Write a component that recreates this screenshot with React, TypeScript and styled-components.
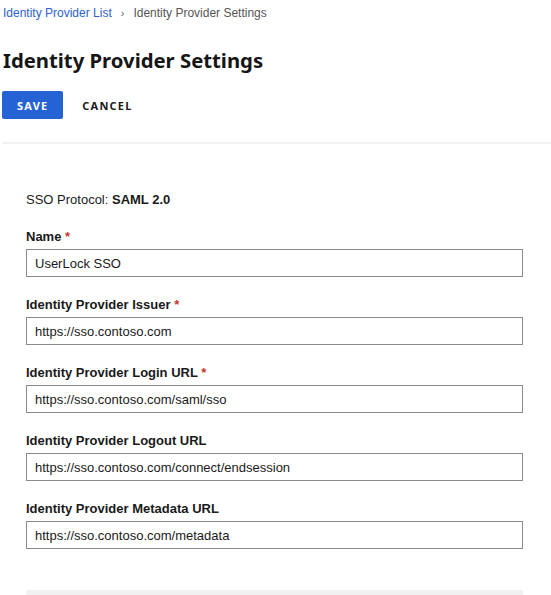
import React from 'react';
import styled, { createGlobalStyle } from 'styled-components';

const GlobalStyle = createGlobalStyle`
  body {
    margin: 0;
    background: #ffffff;
    font-family: "Liberation Sans", Arial, sans-serif;
    color: #1a1a1a;
  }
`;

const Page = styled.div`
  width: 551px;
  padding: 0 0 0 2px;
  box-sizing: border-box;
`;

const Breadcrumb = styled.nav`
  display: flex;
  align-items: center;
  gap: 9px;
  height: 26px;
  padding-left: 1px;
  font-size: 12px;
`;

const CrumbLink = styled.a`
  color: #2d62d0;
  text-decoration: none;
`;

const CrumbSep = styled.span`
  color: #666;
  font-size: 11px;
`;

const CrumbCurrent = styled.span`
  color: #555;
`;

const Title = styled.h1`
  margin: 20px 0 0 1px;
  font-family: "Noto Sans", sans-serif;
  font-weight: 700;
  font-size: 20.3px;
  line-height: 28px;
  color: #161616;
`;

const Toolbar = styled.div`
  display: flex;
  align-items: center;
  gap: 8px;
  margin-top: 17px;
`;

const Button = styled.button<{ $primary?: boolean }>`
  height: 28px;
  padding: 0 ${(p) => (p.$primary ? '15px' : '11px')};
  border: none;
  border-radius: 2px;
  background: ${(p) => (p.$primary ? '#2563d5' : 'transparent')};
  color: ${(p) => (p.$primary ? '#ffffff' : '#1a1a1a')};
  font-family: "Noto Sans", sans-serif;
  font-weight: 700;
  font-size: 11px;
  letter-spacing: 1.2px;
  cursor: pointer;
`;

const Divider = styled.hr`
  margin: 23px 0 0 0;
  border: none;
  height: 2px;
  background: #f1f1f1;
`;

const Form = styled.div`
  display: flex;
  flex-direction: column;
  padding: 48px 28px 0 24px;
`;

const Protocol = styled.div`
  font-size: 13px;
  margin-bottom: 22px;
`;

const Field = styled.div`
  display: flex;
  flex-direction: column;
  gap: 5px;
  margin-bottom: 20px;
`;

const Label = styled.label`
  font-size: 13px;
  font-weight: 700;
  line-height: 15px;
`;

const Star = styled.span`
  color: #c0392b;
`;

const Input = styled.input`
  height: 28px;
  box-sizing: border-box;
  border: 1px solid #8a8a8a;
  padding: 0 8px;
  font-family: "Liberation Sans", Arial, sans-serif;
  font-size: 13px;
  color: #1a1a1a;
  outline: none;
`;

const BottomBar = styled.div`
  margin: 21px 28px 0 24px;
  height: 5px;
  background: #f1f1f1;
`;

const fields = [
  { label: 'Name', required: true, value: 'UserLock SSO' },
  { label: 'Identity Provider Issuer', required: true, value: 'https://sso.contoso.com' },
  { label: 'Identity Provider Login URL', required: true, value: 'https://sso.contoso.com/saml/sso' },
  { label: 'Identity Provider Logout URL', required: false, value: 'https://sso.contoso.com/connect/endsession' },
  { label: 'Identity Provider Metadata URL', required: false, value: 'https://sso.contoso.com/metadata' },
];

export default function App() {
  return (
    <Page>
      <GlobalStyle />
      <Breadcrumb>
        <CrumbLink href="#">Identity Provider List</CrumbLink>
        <CrumbSep>›</CrumbSep>
        <CrumbCurrent>Identity Provider Settings</CrumbCurrent>
      </Breadcrumb>
      <Title>Identity Provider Settings</Title>
      <Toolbar>
        <Button $primary>SAVE</Button>
        <Button>CANCEL</Button>
      </Toolbar>
      <Divider />
      <Form>
        <Protocol>
          SSO Protocol: <b>SAML 2.0</b>
        </Protocol>
        {fields.map((f) => (
          <Field key={f.label}>
            <Label>
              {f.label} {f.required && <Star>*</Star>}
            </Label>
            <Input defaultValue={f.value} />
          </Field>
        ))}
      </Form>
      <BottomBar />
    </Page>
  );
}
